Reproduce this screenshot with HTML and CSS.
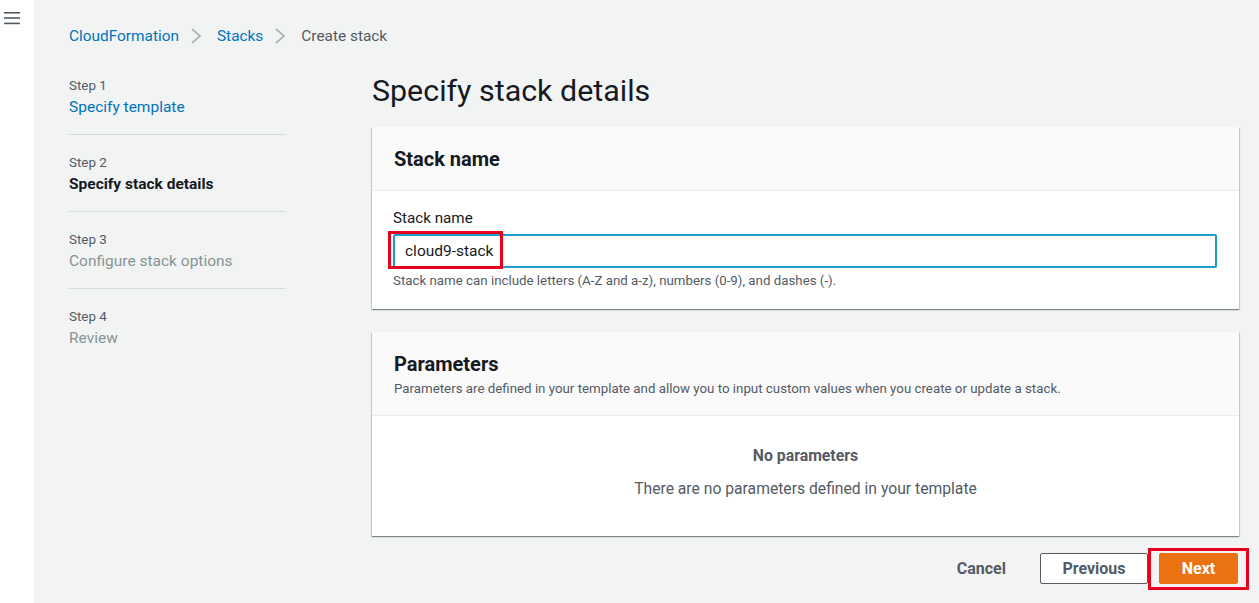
FILE: index.html
```html
<!DOCTYPE html>
<html lang="en">
<head>
<meta charset="utf-8">
<title>Create stack</title>
<link rel="stylesheet" href="styles.css">
</head>
<body>
<div class="app">
  <aside class="rail">
    <button class="menu" aria-label="Open menu">
      <svg width="16" height="13" viewBox="0 0 16 13"><rect x="0" y="0" width="16" height="1.6" fill="#545b64"/><rect x="0" y="5.2" width="16" height="1.6" fill="#545b64"/><rect x="0" y="10.6" width="16" height="1.6" fill="#545b64"/></svg>
    </button>
  </aside>
  <main class="content">
    <nav class="crumbs">
      <a class="crumb-link" href="#">CloudFormation</a>
      <span class="chev"><svg width="12" height="18" viewBox="0 0 12 18"><path d="M2 2 L10 9 L2 16" fill="none" stroke="#aab7b8" stroke-width="1.8"/></svg></span>
      <a class="crumb-link" href="#">Stacks</a>
      <span class="chev"><svg width="12" height="18" viewBox="0 0 12 18"><path d="M2 2 L10 9 L2 16" fill="none" stroke="#aab7b8" stroke-width="1.8"/></svg></span>
      <span class="crumb-current">Create stack</span>
    </nav>
    <div class="layout">
      <ol class="steps">
        <li class="step"><span class="step-num">Step 1</span><a class="step-title link" href="#">Specify template</a></li>
        <li class="step"><span class="step-num">Step 2</span><span class="step-title current">Specify stack details</span></li>
        <li class="step"><span class="step-num">Step 3</span><span class="step-title disabled">Configure stack options</span></li>
        <li class="step"><span class="step-num">Step 4</span><span class="step-title disabled">Review</span></li>
      </ol>
      <section class="main-col">
        <h1 class="page-title">Specify stack details</h1>
        <div class="card">
          <div class="card-head card-head-1">
            <h2 class="card-title">Stack name</h2>
          </div>
          <div class="card-body form-body">
            <label class="field-label" for="sn">Stack name</label>
            <div class="input-wrap">
              <input id="sn" class="text-input" type="text" value="cloud9-stack">
              <span class="mark mark-input"></span>
            </div>
            <p class="hint">Stack name can include letters (A-Z and a-z), numbers (0-9), and dashes (-).</p>
          </div>
        </div>
        <div class="card">
          <div class="card-head card-head-2">
            <h2 class="card-title">Parameters</h2>
            <p class="card-desc">Parameters are defined in your template and allow you to input custom values when you create or update a stack.</p>
          </div>
          <div class="card-body empty-body">
            <p class="empty-title">No parameters</p>
            <p class="empty-text">There are no parameters defined in your template</p>
          </div>
        </div>
        <div class="actions">
          <button class="btn btn-link">Cancel</button>
          <button class="btn btn-normal">Previous</button>
          <div class="next-wrap">
            <button class="btn btn-primary">Next</button>
            <span class="mark mark-next"></span>
          </div>
        </div>
      </section>
    </div>
  </main>
</div>
</body>
</html>
```
FILE: styles.css
```css
* { box-sizing: border-box; }
html, body { margin: 0; padding: 0; }
body {
  font-family: Roboto, "Liberation Sans", Arial, sans-serif;
  color: #16191f;
  background: #f2f3f3;
  width: 1259px;
  height: 603px;
  overflow: hidden;
}
.app { display: flex; height: 603px; }
.rail {
  width: 34px;
  flex: none;
  background: #ffffff;
}
.menu {
  display: block;
  margin: 12px 0 0 4px;
  padding: 0;
  border: 0;
  background: none;
  line-height: 0;
}
.content {
  flex: 1;
  padding: 24px 21px 0 35px;
}
.crumbs {
  display: flex;
  align-items: center;
  height: 22px;
  padding-top: 2px;
  font-size: 15.4px;
}
.crumb-link { color: #0073bb; text-decoration: none; }
.crumb-current { color: #545b64; }
.chev { display: inline-flex; margin: 0 15px 0 11px; }
.layout {
  display: flex;
  gap: 87px;
  margin-top: 17px;
}
.steps {
  list-style: none;
  margin: 0;
  padding: 0;
  width: 216px;
  flex: none;
}
.step {
  display: flex;
  flex-direction: column;
  padding: 19px 0 15px;
  border-bottom: 1px solid #d5dbdb;
}
.step:first-child { padding-top: 14px; }
.step:last-child { border-bottom: 0; }
.step-num { font-size: 13.4px; color: #545b64; line-height: 18px; }
.step-title { font-size: 15.5px; line-height: 24px; }
.link { color: #0073bb; text-decoration: none; }
.current { font-weight: 700; color: #16191f; }
.disabled { color: #879596; }
.main-col { flex: 1; }
.page-title {
  margin: 8px 0 0;
  font-size: 30.4px;
  font-weight: 400;
  line-height: 40px;
  color: #16191f;
}
.card {
  background: #fff;
  margin-top: 16px;
  box-shadow: 0 1px 1px 0 rgba(0,28,36,.3), 1px 1px 1px 0 rgba(0,28,36,.15), -1px 1px 1px 0 rgba(0,28,36,.15);
}
.card + .card { margin-top: 23px; }
.card-head {
  background: #fafafa;
  border-bottom: 1px solid #eaeded;
  padding: 0 22px;
}
.card-head-1 { height: 64px; display: flex; align-items: center; }
.card-head-2 { height: 84px; padding-top: 20px; }
.card-title {
  margin: 0;
  font-size: 20px;
  font-weight: 700;
  line-height: 24px;
}
.card-desc {
  margin: 4px 0 0;
  font-size: 13.3px;
  color: #545b64;
  line-height: 18px;
}
.form-body { padding: 17px 22px 19px 21px; }
.field-label {
  display: block;
  font-size: 15.2px;
  line-height: 20px;
  color: #16191f;
}
.input-wrap { position: relative; margin-top: 6px; }
.text-input {
  display: block;
  width: 824px;
  height: 34px;
  border: 2px solid #1f9ccb;
  border-radius: 2px;
  padding: 0 10px;
  font-family: inherit;
  font-size: 15.5px;
  color: #16191f;
  outline: none;
}
.mark {
  position: absolute;
  border: 3px solid #e8001c;
  pointer-events: none;
}
.mark-input { left: -5px; top: -3px; width: 115px; height: 38px; }
.hint {
  margin: 4px 0 0;
  font-size: 13.3px;
  line-height: 18px;
  color: #545b64;
}
.empty-body {
  height: 120px;
  padding-top: 29px;
  text-align: center;
}
.empty-title {
  margin: 0;
  font-size: 15.8px;
  font-weight: 700;
  line-height: 22px;
  color: #545b64;
}
.empty-text {
  margin: 11px 0 0;
  font-size: 15.7px;
  line-height: 22px;
  color: #545b64;
}
.actions {
  display: flex;
  justify-content: flex-end;
  align-items: center;
  margin-top: 17px;
  padding-right: 1px;
}
.btn {
  font-family: inherit;
  font-size: 16px;
  font-weight: 700;
  height: 31px;
  border-radius: 2px;
  cursor: pointer;
}
.btn-link {
  background: none;
  border: 0;
  color: #545b64;
  padding: 0 20px;
  margin-right: 14px;
}
.btn-normal {
  background: #fff;
  border: 1px solid #545b64;
  color: #545b64;
  width: 108px;
}
.next-wrap { position: relative; margin-left: 11px; }
.btn-primary {
  display: block;
  background: #ec7211;
  border: 1px solid #ec7211;
  color: #fff;
  width: 79px;
}
.mark-next { left: -11px; top: -5px; width: 101px; height: 42px; }
```
